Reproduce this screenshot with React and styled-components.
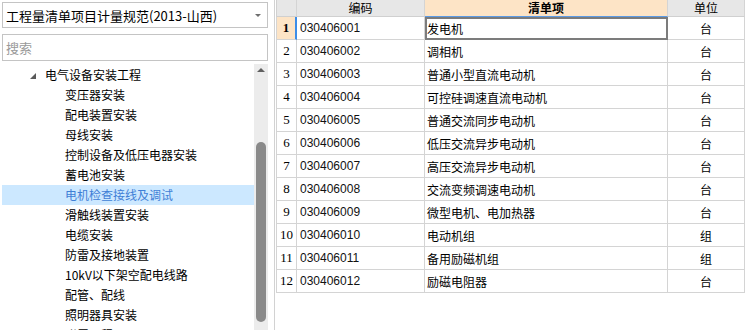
import React from "react";
import styled, { createGlobalStyle } from "styled-components";

const GlobalStyle = createGlobalStyle`
  html, body {
    margin: 0;
    padding: 0;
    background: #fff;
  }
  body {
    font-family: "Noto Sans CJK SC", "Noto Sans", sans-serif;
    color: #000;
  }
`;

const treeItems = [
  "变压器安装",
  "配电装置安装",
  "母线安装",
  "控制设备及低压电器安装",
  "蓄电池安装",
  "电机检查接线及调试",
  "滑触线装置安装",
  "电缆安装",
  "防雷及接地装置",
  "10kV以下架空配电线路",
  "配管、配线",
  "照明器具安装",
  "附属工程",
];

const rows = [
  ["030406001", "发电机", "台"],
  ["030406002", "调相机", "台"],
  ["030406003", "普通小型直流电动机", "台"],
  ["030406004", "可控硅调速直流电动机", "台"],
  ["030406005", "普通交流同步电动机", "台"],
  ["030406006", "低压交流异步电动机", "台"],
  ["030406007", "高压交流异步电动机", "台"],
  ["030406008", "交流变频调速电动机", "台"],
  ["030406009", "微型电机、电加热器", "台"],
  ["030406010", "电动机组", "组"],
  ["030406011", "备用励磁机组", "组"],
  ["030406012", "励磁电阻器", "台"],
];

const Window = styled.div`
  display: flex;
  width: 745px;
  height: 330px;
  overflow: hidden;
  background: #fff;
`;

const LeftPanel = styled.div`
  width: 275px;
  flex-shrink: 0;
  box-sizing: border-box;
  border-right: 1px solid #d2d2d2;
  padding: 2px 6px 0 2px;
  display: flex;
  flex-direction: column;
`;

const Combo = styled.div`
  height: 26px;
  box-sizing: border-box;
  border: 1px solid #c4c4c4;
  display: flex;
  align-items: center;
  justify-content: space-between;
  padding: 0 6px 0 3px;
  font-size: 13px;
  white-space: nowrap;
`;

const ComboArrow = styled.span`
  width: 0;
  height: 0;
  border-left: 3px solid transparent;
  border-right: 3px solid transparent;
  border-top: 3px solid #6e6e6e;
`;

const Search = styled.div`
  margin-top: 6px;
  height: 27px;
  box-sizing: border-box;
  border: 1px solid #c4c4c4;
  display: flex;
  align-items: center;
  padding-left: 3px;
  font-size: 13px;
  color: #9a9a9a;
`;

const TreeArea = styled.div`
  margin-top: 3px;
  flex: 1;
  display: flex;
  min-height: 0;
`;

const TreeList = styled.div`
  flex: 1;
  overflow: hidden;
  padding-top: 1px;
`;

const TreeRow = styled.div`
  height: 20px;
  line-height: 20px;
  display: flex;
  align-items: center;
  padding-left: ${(p) => p.$indent}px;
  font-size: 12px;
  white-space: nowrap;
  background: ${(p) => (p.$selected ? "#cce8ff" : "transparent")};
  color: ${(p) => (p.$selected ? "#3f7fd6" : "#000")};
`;

const Expander = styled.svg`
  width: 6px;
  height: 6px;
  margin-right: 9px;
  margin-top: 1px;
`;

const ScrollTrack = styled.div`
  width: 14px;
  background: #ececec;
  display: flex;
  flex-direction: column;
  align-items: center;
`;

const ScrollArrow = styled.span`
  margin-top: 4px;
  width: 0;
  height: 0;
  border-left: 4px solid transparent;
  border-right: 4px solid transparent;
  border-bottom: 4px solid #606060;
`;

const ScrollThumb = styled.div`
  width: 10px;
  margin-top: ${(p) => p.$offset}px;
  height: ${(p) => p.$size}px;
  background: #8a8a8a;
  border-radius: 5px;
`;

const Grid = styled.div`
  flex: 1;
  margin-left: 1px;
  display: grid;
  grid-template-columns: 21px 128px 243px 1fr;
  grid-template-rows: 17px;
  grid-auto-rows: 23px;
  align-content: start;
`;

const Cell = styled.div`
  box-sizing: border-box;
  border-right: 1px solid #d4d4d4;
  border-bottom: 1px solid #d4d4d4;
  display: flex;
  align-items: center;
  overflow: hidden;
  white-space: nowrap;
  font-size: 12px;
`;

const HeadCell = styled(Cell)`
  overflow: visible;
  align-items: flex-start;
  justify-content: center;
  padding-top: 1px;
  font-size: 12px;
  line-height: 14px;
  font-weight: ${(p) => (p.$active ? 700 : 400)};
  background: ${(p) => (p.$active ? "#fde4c6" : "#e7e7e7")};
  border-bottom-color: ${(p) => (p.$active ? "#5b9be6" : "#d0d0d0")};
  border-left: ${(p) => (p.$first ? "1px solid #d0d0d0" : "none")};
`;

const RowNum = styled(Cell)`
  border-left: 1px solid #d4d4d4;
  justify-content: center;
  font-family: "Liberation Serif", "DejaVu Serif", serif;
  font-size: 13px;
  font-weight: ${(p) => (p.$active ? 700 : 400)};
  background: ${(p) => (p.$active ? "#fde4c6" : "#fff")};
  border-right: ${(p) => (p.$active ? "2px solid #3d8de8" : "1px solid #d4d4d4")};
`;

const CodeCell = styled(Cell)`
  padding-left: 3px;
  font-family: "Liberation Sans", "DejaVu Sans", sans-serif;
  font-size: 12px;
  color: #111;
`;

const NameCell = styled(Cell)`
  padding-left: 2px;
  outline: ${(p) => (p.$focused ? "2px solid #7c7c7c" : "none")};
  outline-offset: -2px;
`;

const UnitCell = styled(Cell)`
  justify-content: center;
`;

export default function App() {
  return (
    <>
      <GlobalStyle />
      <Window>
        <LeftPanel>
          <Combo>
            <span>工程量清单项目计量规范(2013-山西)</span>
            <ComboArrow />
          </Combo>
          <Search>搜索</Search>
          <TreeArea>
            <TreeList>
              <TreeRow $indent={28}>
                <Expander viewBox="0 0 6 6">
                  <polygon points="6,0 6,6 0,6" fill="#5a5a5a" />
                </Expander>
                电气设备安装工程
              </TreeRow>
              {treeItems.map((t) => (
                <TreeRow key={t} $indent={63} $selected={t === "电机检查接线及调试"}>
                  {t}
                </TreeRow>
              ))}
            </TreeList>
            <ScrollTrack>
              <ScrollArrow />
              <ScrollThumb $offset={70} $size={180} />
            </ScrollTrack>
          </TreeArea>
        </LeftPanel>
        <Grid>
          <HeadCell $first />
          <HeadCell>编码</HeadCell>
          <HeadCell $active>清单项</HeadCell>
          <HeadCell>单位</HeadCell>
          {rows.map(([code, name, unit], i) => (
            <React.Fragment key={code}>
              <RowNum $active={i === 0}>{i + 1}</RowNum>
              <CodeCell>{code}</CodeCell>
              <NameCell $focused={i === 0}>{name}</NameCell>
              <UnitCell>{unit}</UnitCell>
            </React.Fragment>
          ))}
        </Grid>
      </Window>
    </>
  );
}
